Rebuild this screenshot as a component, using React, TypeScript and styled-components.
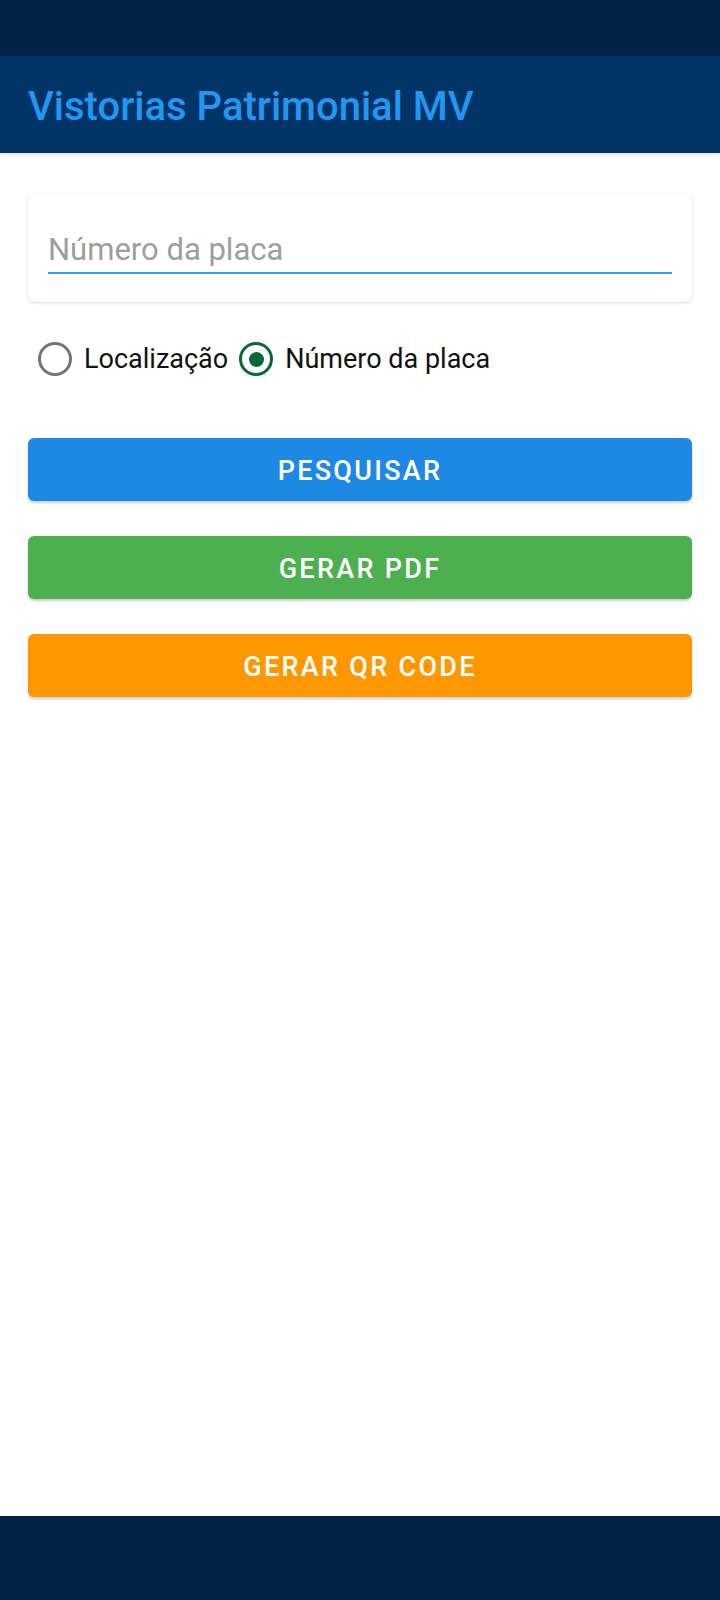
import React from "react";
import styled, { createGlobalStyle } from "styled-components";

const Global = createGlobalStyle`
  html, body { margin: 0; padding: 0; background: #ffffff; }
  body { font-family: Roboto, "Noto Sans", "Liberation Sans", sans-serif; }
  * { box-sizing: border-box; }
`;

const Screen = styled.div`
  display: flex;
  flex-direction: column;
  width: 720px;
  height: 1600px;
  background: #ffffff;
`;

const StatusBar = styled.div`
  height: 56px;
  flex: none;
  background: #002347;
`;

const AppBar = styled.header`
  height: 97px;
  flex: none;
  display: flex;
  align-items: center;
  padding: 4px 0 0 28px;
  background: #003366;
  box-shadow: 0 2px 4px rgba(0, 0, 0, 0.12);
  position: relative;
  z-index: 1;
`;

const Title = styled.h1`
  margin: 0;
  font-size: 40px;
  font-weight: 500;
  color: #2196f3;
  letter-spacing: 0;
`;

const Main = styled.main`
  flex: 1;
  display: flex;
  flex-direction: column;
  padding: 41px 28px 0;
`;

const Card = styled.div`
  background: #ffffff;
  border-radius: 6px;
  box-shadow: 0 1px 3px rgba(0, 0, 0, 0.14), 0 0 1px rgba(0, 0, 0, 0.08);
  padding: 32px 20px 28px;
`;

const TextInput = styled.input`
  display: block;
  width: 100%;
  height: 48px;
  padding: 0;
  border: none;
  border-bottom: 2px solid #3a9cf0;
  outline: none;
  background: transparent;
  font-family: Roboto, "Noto Sans", sans-serif;
  font-size: 31px;
  color: #212121;
  &::placeholder { color: #9e9e9e; }
`;

const RadioRow = styled.div`
  display: flex;
  align-items: center;
  height: 40px;
  margin-top: 37px;
  padding-left: 10px;
  gap: 11px;
`;

const RadioItem = styled.label`
  display: flex;
  align-items: center;
  gap: 12px;
`;

const Circle = styled.span<{ $checked?: boolean }>`
  width: 34px;
  height: 34px;
  border-radius: 50%;
  border: 3.5px solid ${(p) => (p.$checked ? "#08683a" : "#757575")};
  display: flex;
  align-items: center;
  justify-content: center;
  &::after {
    content: "";
    display: ${(p) => (p.$checked ? "block" : "none")};
    width: 15px;
    height: 15px;
    border-radius: 50%;
    background: #08683a;
  }
`;

const Label = styled.span`
  font-size: 27px;
  color: #111111;
`;

const Buttons = styled.div`
  display: flex;
  flex-direction: column;
  gap: 35px;
  margin-top: 59px;
`;

const ActionButton = styled.button<{ $bg: string }>`
  height: 63px;
  width: 100%;
  border: none;
  border-radius: 6px;
  padding: 3px 0 0;
  background: ${(p) => p.$bg};
  color: #ffffff;
  font-family: Roboto, "Noto Sans", sans-serif;
  font-size: 27px;
  font-weight: 500;
  letter-spacing: 2.3px;
  text-transform: uppercase;
  box-shadow: 0 2px 3px rgba(0, 0, 0, 0.2);
  cursor: pointer;
`;

const NavBar = styled.div`
  height: 84px;
  flex: none;
  background: #002247;
`;

export default function App() {
  return (
    <>
      <Global />
      <Screen>
        <StatusBar />
        <AppBar>
          <Title>Vistorias Patrimonial MV</Title>
        </AppBar>
        <Main>
          <Card>
            <TextInput placeholder="Número da placa" />
          </Card>
          <RadioRow>
            <RadioItem>
              <Circle />
              <Label>Localização</Label>
            </RadioItem>
            <RadioItem>
              <Circle $checked />
              <Label>Número da placa</Label>
            </RadioItem>
          </RadioRow>
          <Buttons>
            <ActionButton $bg="#1e88e5">Pesquisar</ActionButton>
            <ActionButton $bg="#4caf50">Gerar PDF</ActionButton>
            <ActionButton $bg="#ff9800">Gerar QR Code</ActionButton>
          </Buttons>
        </Main>
        <NavBar />
      </Screen>
    </>
  );
}
